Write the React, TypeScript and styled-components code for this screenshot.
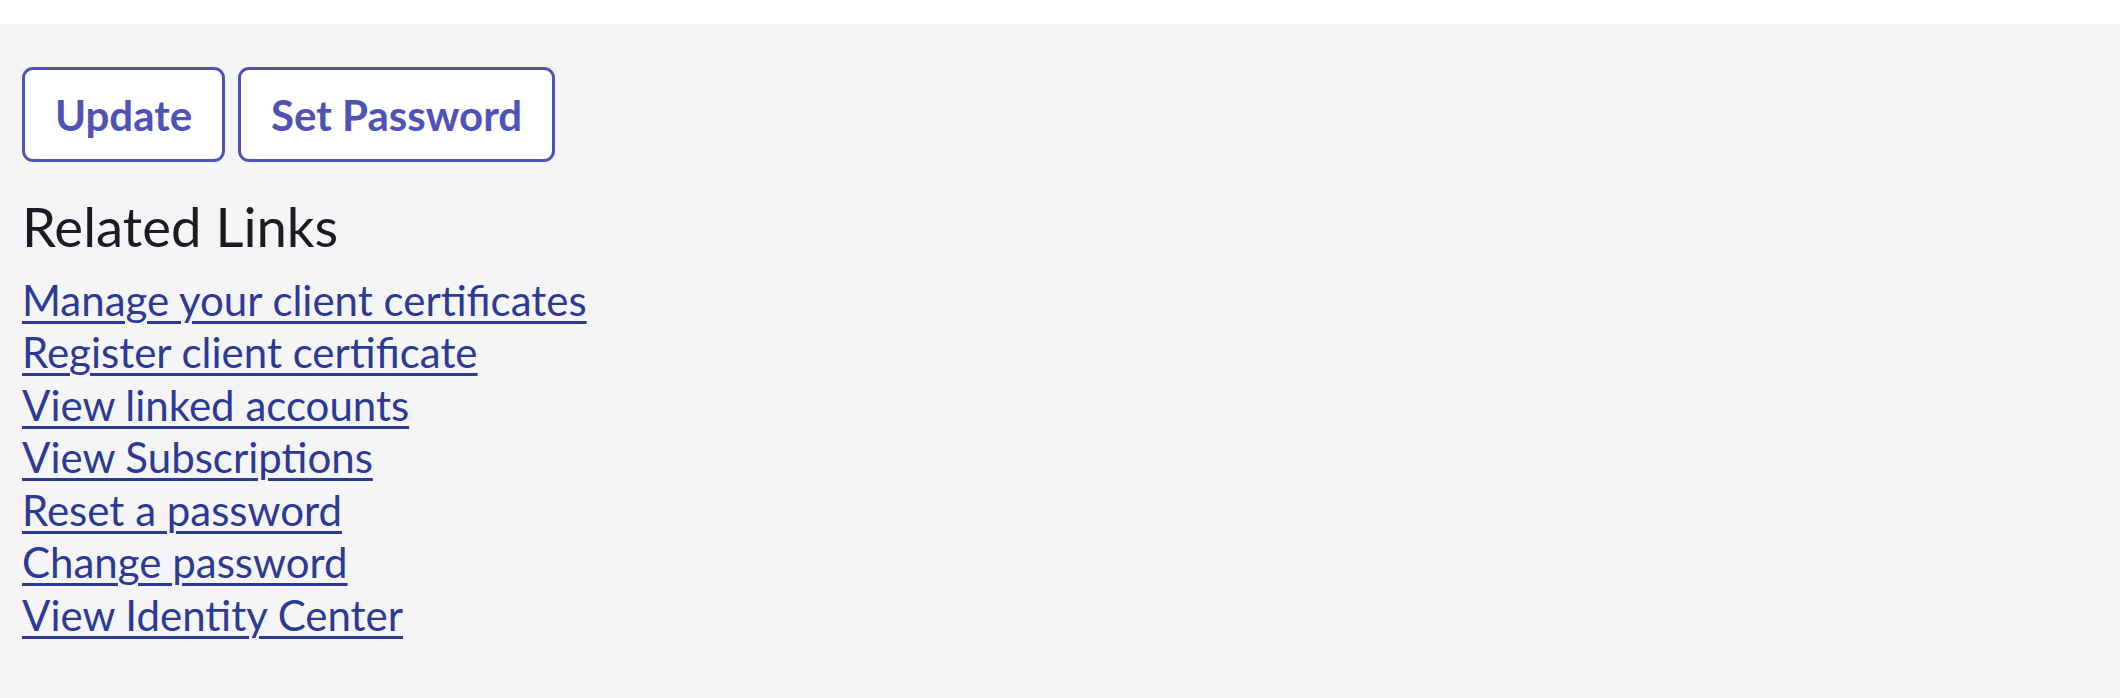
import React from "react";
import styled, { createGlobalStyle } from "styled-components";

const GlobalStyle = createGlobalStyle`
  html, body {
    margin: 0;
    padding: 0;
    background: #ffffff;
    font-family: Lato, "Open Sans", "Liberation Sans", sans-serif;
  }
`;

const TopBar = styled.div`
  height: 24px;
  background: #ffffff;
`;

const Page = styled.main`
  background: #f5f5f7;
  min-height: 674px;
  padding: 43px 22px 0;
  box-sizing: border-box;
`;

const ButtonRow = styled.div`
  display: flex;
  gap: 13px;
`;

const OutlineButton = styled.button`
  height: 95px;
  padding: 0 30px;
  border: 3px solid #4f52b8;
  border-radius: 11px;
  background: #ffffff;
  color: #4f52b8;
  font-family: Lato, "Liberation Sans", sans-serif;
  font-weight: 700;
  font-size: 42px;
  cursor: pointer;
`;

const Heading = styled.h2`
  margin: 32px 0 15px;
  font-weight: 400;
  font-size: 54.5px;
  line-height: 64.8px;
  color: #1b1c20;
`;

const LinkList = styled.nav`
  display: flex;
  flex-direction: column;
  align-items: flex-start;
`;

const RelatedLink = styled.a`
  font-size: 42px;
  line-height: 52.5px;
  color: #2c3a96;
  text-decoration: underline;
  text-decoration-thickness: 3px;
  text-underline-offset: 5px;
`;

const links = [
  "Manage your client certificates",
  "Register client certificate",
  "View linked accounts",
  "View Subscriptions",
  "Reset a password",
  "Change password",
  "View Identity Center",
];

export default function App() {
  return (
    <>
      <GlobalStyle />
      <TopBar />
      <Page>
        <ButtonRow>
          <OutlineButton>Update</OutlineButton>
          <OutlineButton>Set Password</OutlineButton>
        </ButtonRow>
        <Heading>Related Links</Heading>
        <LinkList>
          {links.map(l => (
            <RelatedLink key={l} href="#">
              {l}
            </RelatedLink>
          ))}
        </LinkList>
      </Page>
    </>
  );
}
